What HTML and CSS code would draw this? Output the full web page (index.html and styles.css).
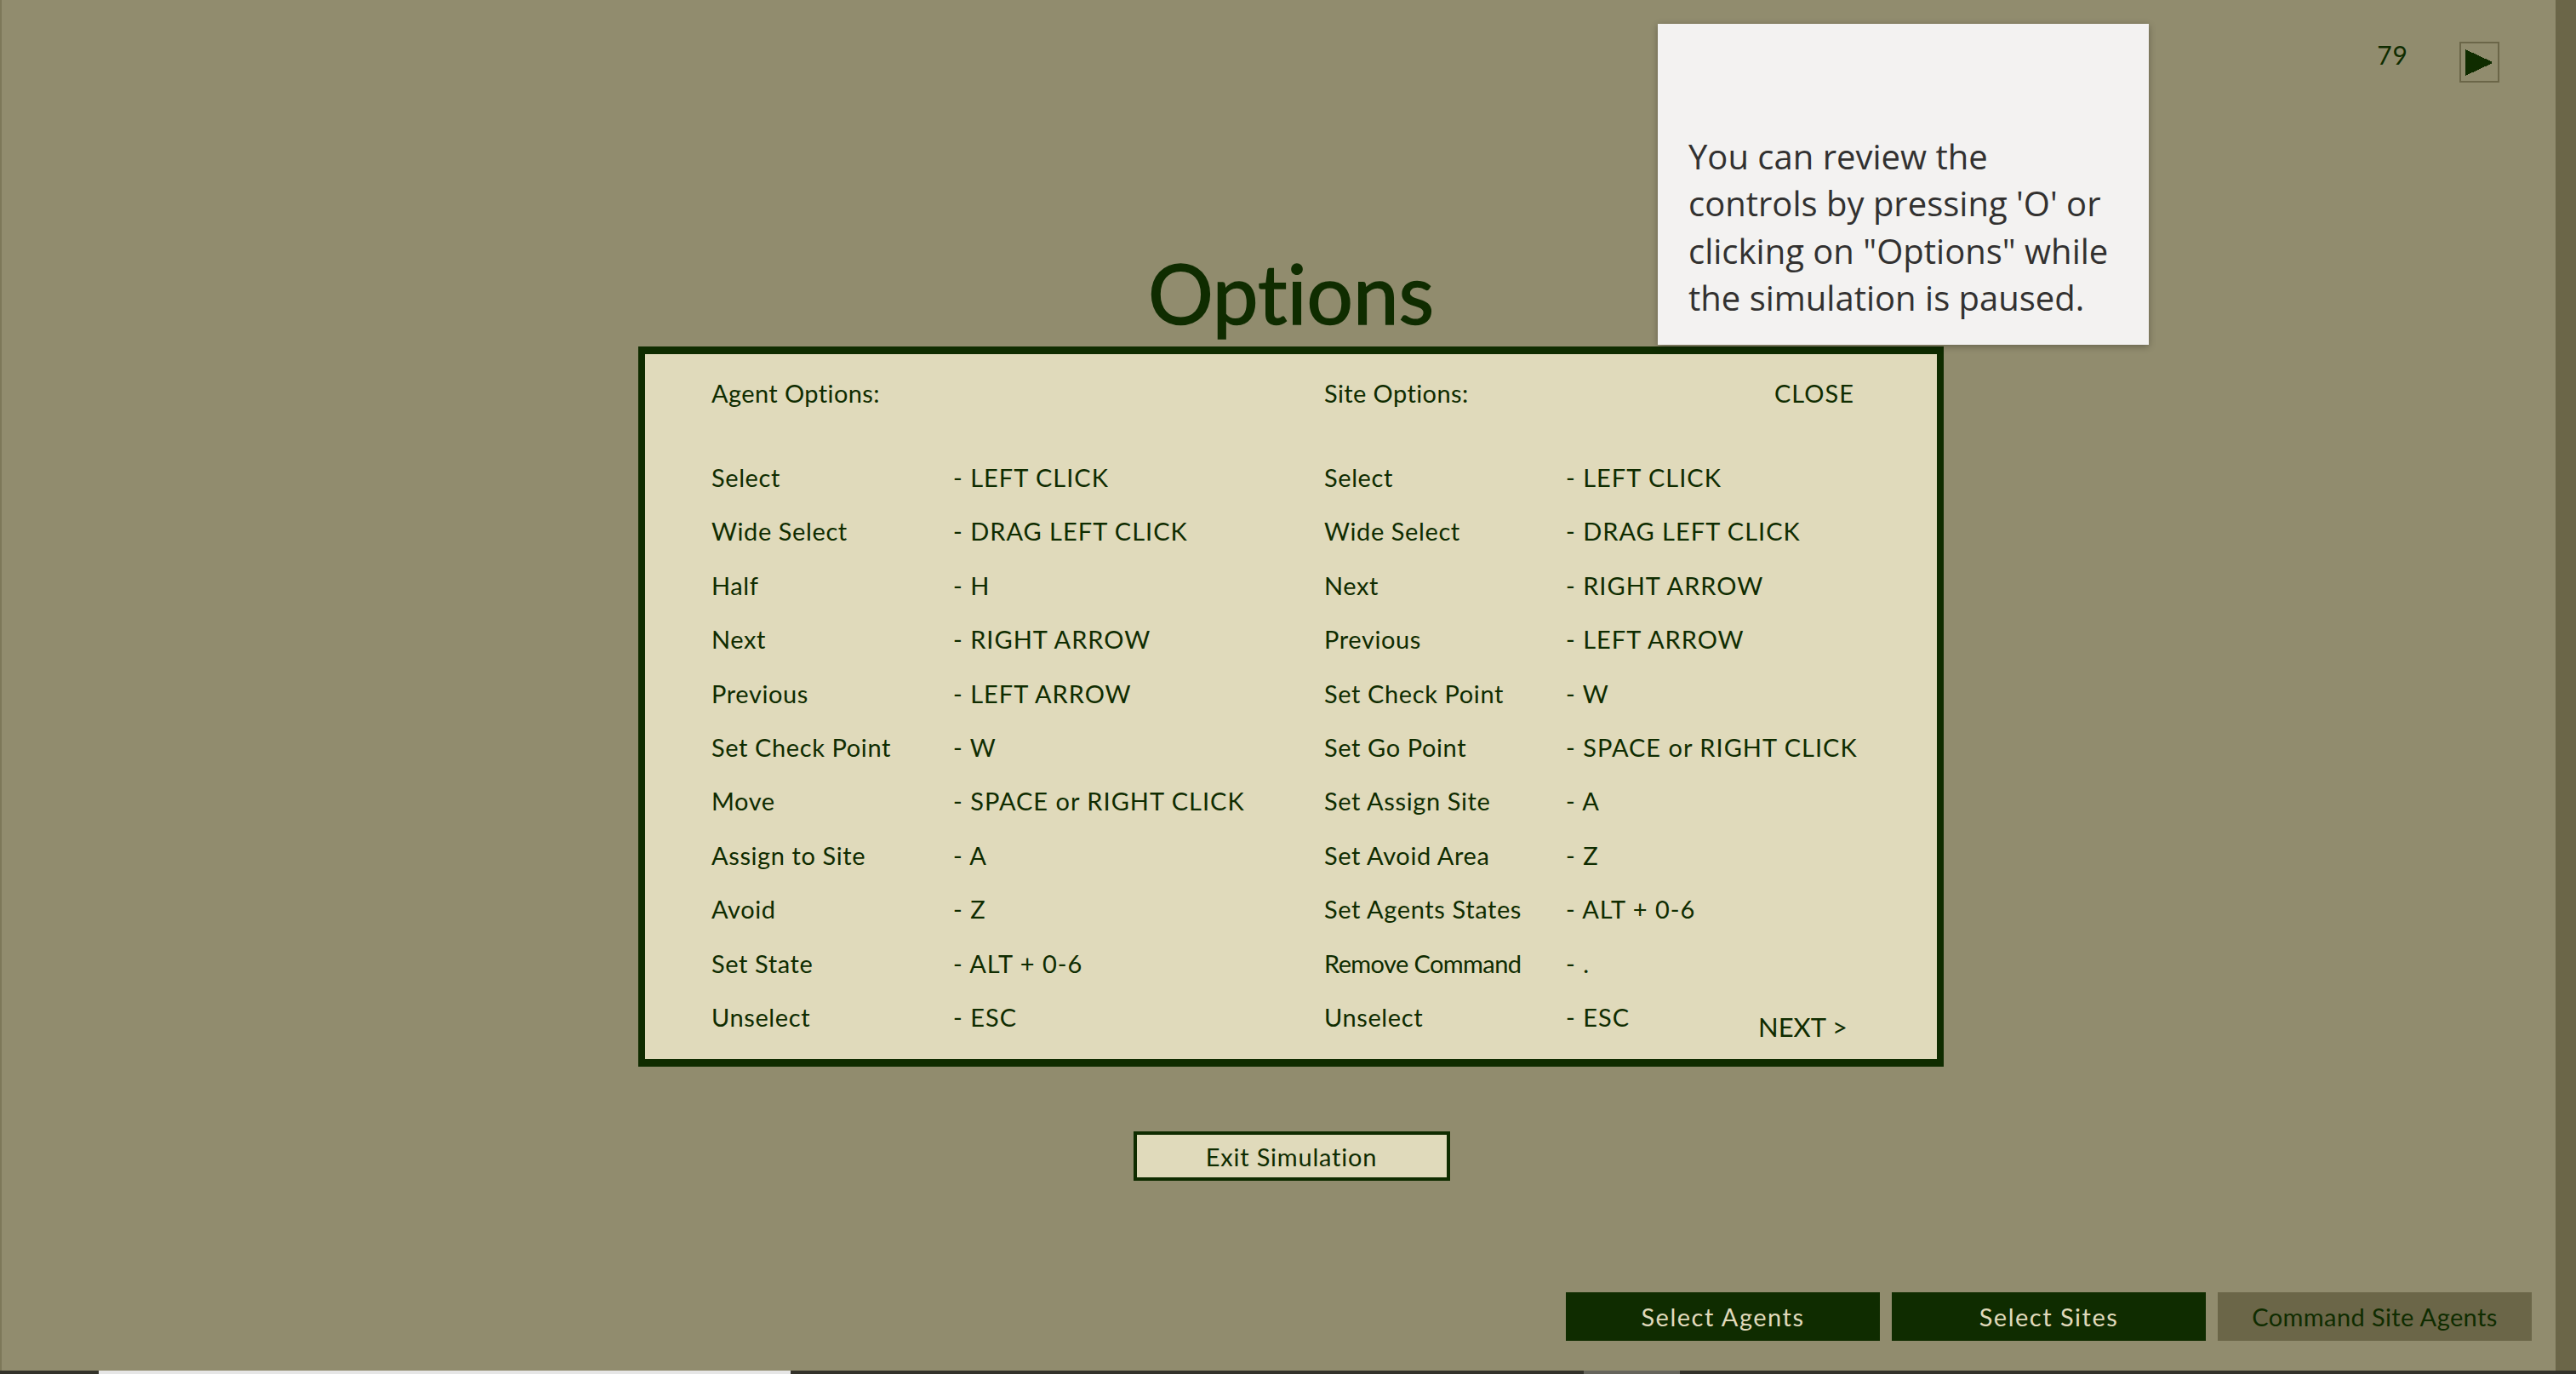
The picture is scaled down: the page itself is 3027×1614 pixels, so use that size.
FILE: index.html
```html
<!DOCTYPE html>
<html lang="en">
<head>
<meta charset="utf-8">
<title>Options</title>
<link rel="stylesheet" href="styles.css">
</head>
<body>
<div class="app">
  <main class="main">
    <header class="top">
      <span class="timer">79</span>
      <button class="play" aria-label="Play">
        <svg class="play-icon" width="31" height="31" viewBox="0 0 31 31" shape-rendering="crispEdges"><polygon points="0,0 31,14.5 31,16.5 0,31" fill="#0f2c00"/></svg>
      </button>
    </header>
    <div class="dialog">
      <h1 class="title">Options</h1>
      <section class="panel">
        <div class="col">
          <div class="head"><span>Agent Options:</span></div>
          <div class="opt"><span>Select</span><span>- LEFT CLICK</span></div>
          <div class="opt"><span>Wide Select</span><span>- DRAG LEFT CLICK</span></div>
          <div class="opt"><span>Half</span><span>- H</span></div>
          <div class="opt"><span>Next</span><span>- RIGHT ARROW</span></div>
          <div class="opt"><span>Previous</span><span>- LEFT ARROW</span></div>
          <div class="opt"><span>Set Check Point</span><span>- W</span></div>
          <div class="opt"><span>Move</span><span>- SPACE or RIGHT CLICK</span></div>
          <div class="opt"><span>Assign to Site</span><span>- A</span></div>
          <div class="opt"><span>Avoid</span><span>- Z</span></div>
          <div class="opt"><span>Set State</span><span>- ALT + 0-6</span></div>
          <div class="opt"><span>Unselect</span><span>- ESC</span></div>
        </div>
        <div class="col">
          <div class="head head-site"><span>Site Options:</span><span class="close">CLOSE</span></div>
          <div class="opt"><span>Select</span><span>- LEFT CLICK</span></div>
          <div class="opt"><span>Wide Select</span><span>- DRAG LEFT CLICK</span></div>
          <div class="opt"><span>Next</span><span>- RIGHT ARROW</span></div>
          <div class="opt"><span>Previous</span><span>- LEFT ARROW</span></div>
          <div class="opt"><span>Set Check Point</span><span>- W</span></div>
          <div class="opt"><span>Set Go Point</span><span>- SPACE or RIGHT CLICK</span></div>
          <div class="opt"><span>Set Assign Site</span><span>- A</span></div>
          <div class="opt"><span>Set Avoid Area</span><span>- Z</span></div>
          <div class="opt"><span>Set Agents States</span><span>- ALT + 0-6</span></div>
          <div class="opt"><span class="tight">Remove Command</span><span>- .</span></div>
          <div class="opt"><span>Unselect</span><span>- ESC</span></div>
        </div>
        <span class="next">NEXT &gt;</span>
      </section>
      <button class="exit">Exit Simulation</button>
    </div>
    <nav class="modes">
      <button class="mode">Select Agents</button>
      <button class="mode">Select Sites</button>
      <button class="mode mode-off">Command Site Agents</button>
    </nav>
    <aside class="tip"><p>You can review the controls by pressing 'O' or clicking on "Options" while the simulation is paused.</p></aside>
  </main>
  <div class="strip"></div>
</div>
<div class="scrollbar">
  <i class="sb-dark sb-start"></i><i class="sb-thumb"></i><i class="sb-dark sb-mid"></i><i class="sb-gray"></i><i class="sb-dark sb-end"></i>
</div>
</body>
</html>
```
FILE: styles.css
```css
html, body { margin: 0; padding: 0; }
body {
  width: 3027px;
  height: 1614px;
  overflow: hidden;
  display: flex;
  flex-direction: column;
  background: #918c6e;
  font-family: "Lato", "Open Sans", sans-serif;
  font-variant-ligatures: none;
  color: #0f2c00;
}
.app { display: flex; height: 1610px; }
.main {
  position: relative;
  flex: 1;
  display: flex;
  flex-direction: column;
  border-left: 2px solid #7d7859;
  background: #918c6e;
}
.strip { width: 24px; background: #6b6648; }

.top {
  display: flex;
  justify-content: flex-end;
  align-items: flex-start;
  gap: 60px;
  height: 48px;
  padding: 49px 66px 0 0;
}
.timer { font-size: 30px; line-height: 32px; letter-spacing: 1px; margin-top: -1px; }
.play {
  box-sizing: border-box;
  width: 47px;
  height: 48px;
  padding: 0 0 0 5px;
  display: flex;
  align-items: center;
  justify-content: flex-start;
  background: none;
  border: 2px solid #6b6648;
}
.play-icon { display: block; }

.dialog {
  width: 1534px;
  margin-left: 748px;
  display: flex;
  flex-direction: column;
  align-items: center;
}
.title {
  margin: 187px 0 3px;
  font-size: 96px;
  line-height: 120px;
  font-weight: 400;
  -webkit-text-stroke: 1.5px #0f2c00;
}
.panel {
  position: relative;
  box-sizing: border-box;
  width: 1534px;
  height: 846px;
  padding: 14px 0 0 78px;
  display: flex;
  background: #e0dabb;
  border-style: solid;
  border-color: #0f2c00;
  border-width: 9px 8px;
  font-size: 29px;
  line-height: 63.4px;
}
.col { width: 720px; }
.head { height: 63.4px; margin-bottom: 35.6px; letter-spacing: .4px; }
.head-site { display: grid; grid-template-columns: 529px 1fr; }
.close { letter-spacing: 1px; }
.opt { display: grid; grid-template-columns: 284px 1fr; height: 63.4px; white-space: nowrap; letter-spacing: 1px; }
.opt > span:first-child { letter-spacing: .6px; }
.opt > .tight:first-child { letter-spacing: -.6px; }
.next { position: absolute; left: 1308px; top: 759px; font-size: 31px; }

.exit {
  box-sizing: border-box;
  width: 372px;
  height: 58px;
  margin: 76px 0 0 1px;
  background: #e0dabb;
  border: 4px solid #0f2c00;
  color: #0f2c00;
  font: 29px "Lato", sans-serif;
  letter-spacing: .8px;
  padding: 0;
}

.modes {
  margin: auto 28px 35px auto;
  display: flex;
  gap: 14px;
}
.mode {
  width: 369px;
  height: 57px;
  padding: 0;
  border: 0;
  background: #0f2c00;
  color: #e0dabb;
  font: 29px "Lato", sans-serif;
  letter-spacing: 1.5px;
}
.mode-off { background: #6b6648; color: #0f2c00; letter-spacing: .4px; }

.tip {
  position: absolute;
  left: 1946px;
  top: 28px;
  box-sizing: border-box;
  width: 577px;
  height: 377px;
  padding: 0 36px 27px 36px;
  display: flex;
  align-items: flex-end;
  background: #f3f2f1;
  box-shadow: 0 2px 8px rgba(0, 0, 0, .3);
  color: #323130;
  font-family: "Open Sans", sans-serif;
  font-size: 40px;
  line-height: 55.6px;
}
.tip p { margin: 0; }

.scrollbar { display: flex; height: 4px; background: #33322a; }
.scrollbar i { display: block; }
.sb-start { width: 116px; }
.sb-thumb { width: 813px; background: #e6e6e6; }
.sb-mid { width: 932px; }
.sb-gray { width: 113px; background: #66655c; }
.sb-end { flex: 1; }
```
